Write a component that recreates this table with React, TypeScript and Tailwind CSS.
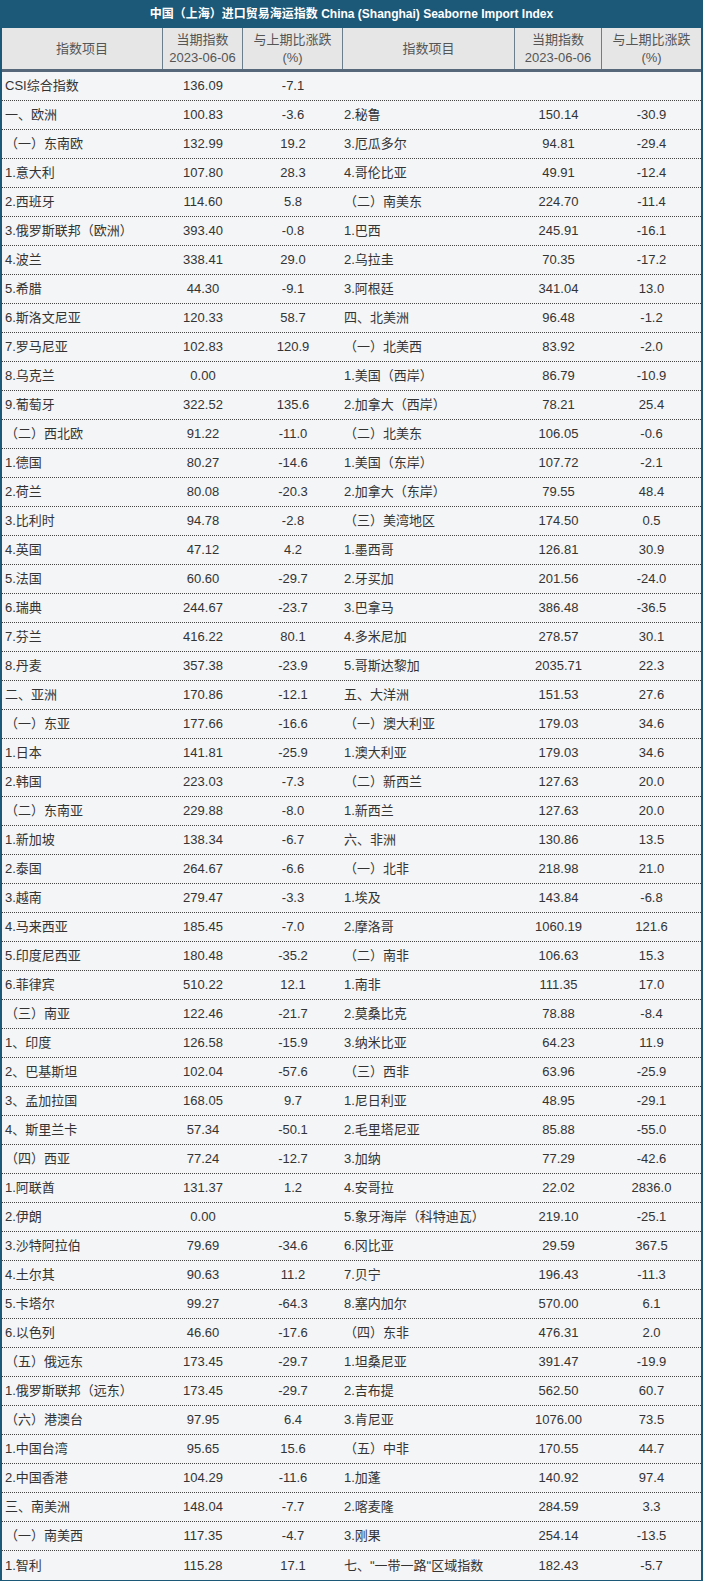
import React from "react";

type Row = [string, string, string];

const LEFT: Row[] = [
  ["CSI综合指数", "136.09", "-7.1"],
  ["一、欧洲", "100.83", "-3.6"],
  ["（一）东南欧", "132.99", "19.2"],
  ["1.意大利", "107.80", "28.3"],
  ["2.西班牙", "114.60", "5.8"],
  ["3.俄罗斯联邦（欧洲）", "393.40", "-0.8"],
  ["4.波兰", "338.41", "29.0"],
  ["5.希腊", "44.30", "-9.1"],
  ["6.斯洛文尼亚", "120.33", "58.7"],
  ["7.罗马尼亚", "102.83", "120.9"],
  ["8.乌克兰", "0.00", ""],
  ["9.葡萄牙", "322.52", "135.6"],
  ["（二）西北欧", "91.22", "-11.0"],
  ["1.德国", "80.27", "-14.6"],
  ["2.荷兰", "80.08", "-20.3"],
  ["3.比利时", "94.78", "-2.8"],
  ["4.英国", "47.12", "4.2"],
  ["5.法国", "60.60", "-29.7"],
  ["6.瑞典", "244.67", "-23.7"],
  ["7.芬兰", "416.22", "80.1"],
  ["8.丹麦", "357.38", "-23.9"],
  ["二、亚洲", "170.86", "-12.1"],
  ["（一）东亚", "177.66", "-16.6"],
  ["1.日本", "141.81", "-25.9"],
  ["2.韩国", "223.03", "-7.3"],
  ["（二）东南亚", "229.88", "-8.0"],
  ["1.新加坡", "138.34", "-6.7"],
  ["2.泰国", "264.67", "-6.6"],
  ["3.越南", "279.47", "-3.3"],
  ["4.马来西亚", "185.45", "-7.0"],
  ["5.印度尼西亚", "180.48", "-35.2"],
  ["6.菲律宾", "510.22", "12.1"],
  ["（三）南亚", "122.46", "-21.7"],
  ["1、印度", "126.58", "-15.9"],
  ["2、巴基斯坦", "102.04", "-57.6"],
  ["3、孟加拉国", "168.05", "9.7"],
  ["4、斯里兰卡", "57.34", "-50.1"],
  ["（四）西亚", "77.24", "-12.7"],
  ["1.阿联酋", "131.37", "1.2"],
  ["2.伊朗", "0.00", ""],
  ["3.沙特阿拉伯", "79.69", "-34.6"],
  ["4.土尔其", "90.63", "11.2"],
  ["5.卡塔尔", "99.27", "-64.3"],
  ["6.以色列", "46.60", "-17.6"],
  ["（五）俄远东", "173.45", "-29.7"],
  ["1.俄罗斯联邦（远东）", "173.45", "-29.7"],
  ["（六）港澳台", "97.95", "6.4"],
  ["1.中国台湾", "95.65", "15.6"],
  ["2.中国香港", "104.29", "-11.6"],
  ["三、南美洲", "148.04", "-7.7"],
  ["（一）南美西", "117.35", "-4.7"],
  ["1.智利", "115.28", "17.1"],
];

const RIGHT: Row[] = [
  ["", "", ""],
  ["2.秘鲁", "150.14", "-30.9"],
  ["3.厄瓜多尔", "94.81", "-29.4"],
  ["4.哥伦比亚", "49.91", "-12.4"],
  ["（二）南美东", "224.70", "-11.4"],
  ["1.巴西", "245.91", "-16.1"],
  ["2.乌拉圭", "70.35", "-17.2"],
  ["3.阿根廷", "341.04", "13.0"],
  ["四、北美洲", "96.48", "-1.2"],
  ["（一）北美西", "83.92", "-2.0"],
  ["1.美国（西岸）", "86.79", "-10.9"],
  ["2.加拿大（西岸）", "78.21", "25.4"],
  ["（二）北美东", "106.05", "-0.6"],
  ["1.美国（东岸）", "107.72", "-2.1"],
  ["2.加拿大（东岸）", "79.55", "48.4"],
  ["（三）美湾地区", "174.50", "0.5"],
  ["1.墨西哥", "126.81", "30.9"],
  ["2.牙买加", "201.56", "-24.0"],
  ["3.巴拿马", "386.48", "-36.5"],
  ["4.多米尼加", "278.57", "30.1"],
  ["5.哥斯达黎加", "2035.71", "22.3"],
  ["五、大洋洲", "151.53", "27.6"],
  ["（一）澳大利亚", "179.03", "34.6"],
  ["1.澳大利亚", "179.03", "34.6"],
  ["（二）新西兰", "127.63", "20.0"],
  ["1.新西兰", "127.63", "20.0"],
  ["六、非洲", "130.86", "13.5"],
  ["（一）北非", "218.98", "21.0"],
  ["1.埃及", "143.84", "-6.8"],
  ["2.摩洛哥", "1060.19", "121.6"],
  ["（二）南非", "106.63", "15.3"],
  ["1.南非", "111.35", "17.0"],
  ["2.莫桑比克", "78.88", "-8.4"],
  ["3.纳米比亚", "64.23", "11.9"],
  ["（三）西非", "63.96", "-25.9"],
  ["1.尼日利亚", "48.95", "-29.1"],
  ["2.毛里塔尼亚", "85.88", "-55.0"],
  ["3.加纳", "77.29", "-42.6"],
  ["4.安哥拉", "22.02", "2836.0"],
  ["5.象牙海岸（科特迪瓦）", "219.10", "-25.1"],
  ["6.冈比亚", "29.59", "367.5"],
  ["7.贝宁", "196.43", "-11.3"],
  ["8.塞内加尔", "570.00", "6.1"],
  ["（四）东非", "476.31", "2.0"],
  ["1.坦桑尼亚", "391.47", "-19.9"],
  ["2.吉布提", "562.50", "60.7"],
  ["3.肯尼亚", "1076.00", "73.5"],
  ["（五）中非", "170.55", "44.7"],
  ["1.加蓬", "140.92", "97.4"],
  ["2.喀麦隆", "284.59", "3.3"],
  ["3.刚果", "254.14", "-13.5"],
  ["七、\u02ba一带一路\u02ba区域指数", "182.43", "-5.7"],
];

const COLS = "grid grid-cols-[161px_80px_100px_172px_87px_99px]";

function HeaderCell({ lines, last }: { lines: string[]; last?: boolean }) {
  return (
    <div
      className={
        "flex flex-col items-center justify-center leading-[18px] " +
        (last ? "" : "border-r border-[#6b7e8c]")
      }
    >
      {lines.map((l) => (
        <span key={l}>{l}</span>
      ))}
    </div>
  );
}

export default function App() {
  return (
    <div
      className="w-[703px] bg-[#f4f5f7] text-[13px] text-[#333]"
      style={{ fontFamily: '"Liberation Sans", "Noto Sans CJK SC", sans-serif' }}
    >
      <div className="flex h-[28px] items-center justify-center bg-[#1c5878] text-[12px] font-bold text-white">
        中国（上海）进口贸易海运指数 China (Shanghai) Seaborne Import Index
      </div>
      <div className="border-x-2 border-b-2 border-[#1c5878]">
        <div
          className={
            COLS +
            " h-[44px] border-b-[3px] border-[#56687a] bg-[#e6e6e6] text-[#555]"
          }
        >
          <HeaderCell lines={["指数项目"]} />
          <HeaderCell lines={["当期指数", "2023-06-06"]} />
          <HeaderCell lines={["与上期比涨跌", "(%)"]} />
          <HeaderCell lines={["指数项目"]} />
          <HeaderCell lines={["当期指数", "2023-06-06"]} />
          <HeaderCell lines={["与上期比涨跌", "(%)"]} last />
        </div>
        {LEFT.map((l, i) => {
          const r = RIGHT[i];
          const last = i === LEFT.length - 1;
          return (
            <div
              key={i}
              className={
                COLS +
                " h-[29px] items-center " +
                (last ? "" : "border-b border-dotted border-[#444]")
              }
            >
              <span className="truncate whitespace-nowrap pl-[3px]">{l[0]}</span>
              <span className="text-center">{l[1]}</span>
              <span className="text-center">{l[2]}</span>
              <span className="whitespace-nowrap pl-[1px]">{r[0]}</span>
              <span className="text-center">{r[1]}</span>
              <span className="text-center">{r[2]}</span>
            </div>
          );
        })}
      </div>
    </div>
  );
}
